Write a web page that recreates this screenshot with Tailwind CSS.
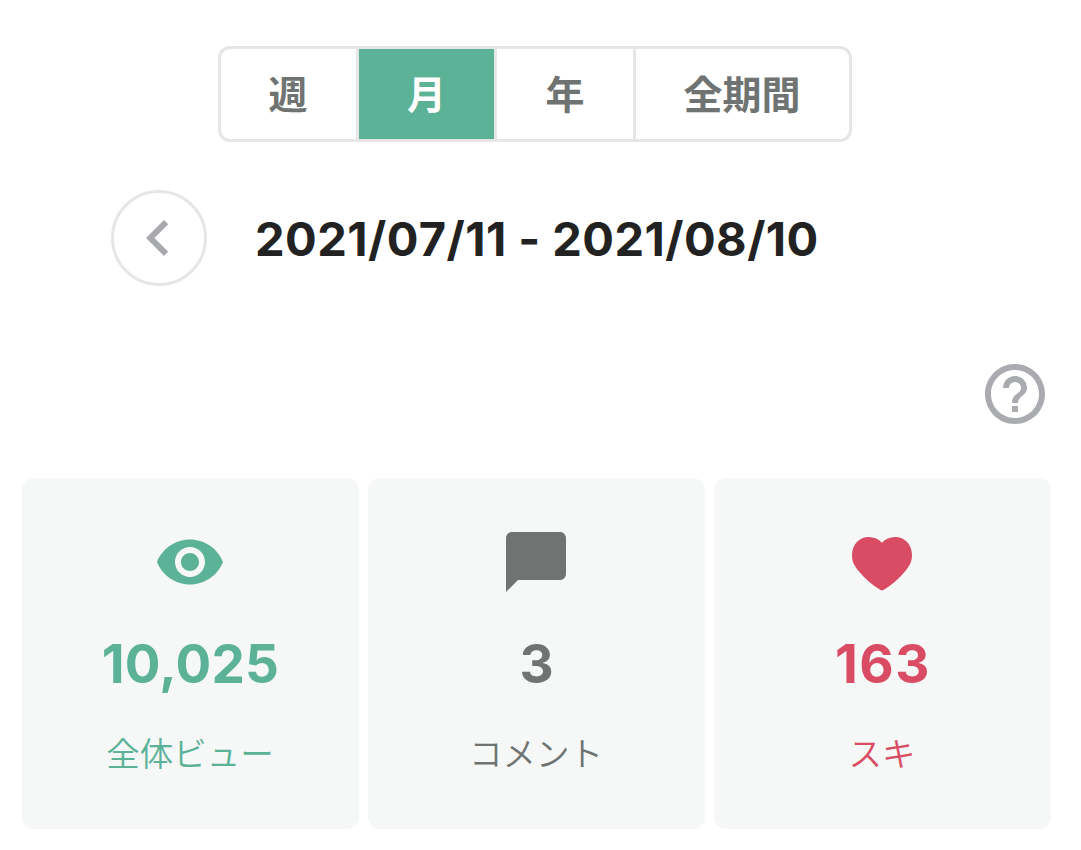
<!DOCTYPE html>
<html lang="ja">
<head>
	<meta charset="UTF-8" />
	<meta name="viewport" content="width=device-width, initial-scale=1.0" />
	<title>ダッシュボード</title>
	<script src="https://cdn.jsdelivr.net/npm/@tailwindcss/browser@4"></script>
</head>
<body class="bg-white font-['Inter','Noto_Sans_CJK_JP',sans-serif] text-[#222222]">
	<main class="w-[1081px] h-[850px] overflow-hidden pt-[46px]">
		<!-- Period tabs -->
		<div class="ml-[218px] w-[634px] h-24 flex border-3 border-[#e6e6e6] rounded-xl overflow-hidden text-[39px] leading-[90px] font-bold text-[#6f7372]">
			<button class="w-[138px] pt-px pr-px border-r-3 border-[#e6e6e6]">週</button>
			<button class="w-[138px] pt-px border-r-3 border-[#e6e6e6] bg-[#5bb296] bg-clip-padding text-white">月</button>
			<button class="w-[139px] pt-px border-r-3 border-[#e6e6e6]">年</button>
			<button class="flex-1 pt-px pr-px">全期間</button>
		</div>

		<!-- Date range -->
		<div class="mt-12 ml-[111px] flex items-center">
			<button class="size-24 pr-[2px] flex items-center justify-center rounded-full border-3 border-[#e6e6e6] text-[#a7a9ac]">
				<svg class="size-[72px]" viewBox="0 0 24 24" fill="currentColor">
					<path d="M15.41 7.41L14 6l-6 6 6 6 1.41-1.41L10.83 12z" />
				</svg>
			</button>
			<p class="ml-12 pt-px text-[47px] leading-none font-bold tracking-[0.45px] whitespace-nowrap [font-kerning:none] [font-feature-settings:'calt'_0]">2021/07/11 - 2021/08/10</p>
		</div>

		<!-- Help -->
		<div class="mt-[72px] pr-[30px] flex justify-end text-[#a9abb0]">
			<svg class="size-[72px]" viewBox="0 0 24 24" fill="currentColor">
				<path d="M11 18h2v-2h-2v2zm1-16C6.48 2 2 6.48 2 12s4.48 10 10 10 10-4.48 10-10S17.52 2 12 2zm0 18c-4.41 0-8-3.59-8-8s3.59-8 8-8 8 3.59 8 8-3.59 8-8 8zm0-14c-2.21 0-4 1.79-4 4h2c0-1.1.9-2 2-2s2 .9 2 2c0 2-3 1.75-3 5h2c0-2.25 3-2.5 3-5 0-2.21-1.79-4-4-4z" />
			</svg>
		</div>

		<!-- Stats -->
		<div class="mt-12 ml-[22px] w-[1029px] grid grid-cols-3 gap-[9px] text-center">
			<div class="h-[351px] pt-12 flex flex-col items-center rounded-xl bg-[#f6f8f8] text-[#5bb296]">
				<svg class="size-[72px] mr-[2px]" viewBox="0 0 24 24" fill="currentColor">
					<path d="M12 4.5C7 4.5 2.73 7.61 1 12c1.73 4.39 6 7.5 11 7.5s9.27-3.11 11-7.5c-1.73-4.39-6-7.5-11-7.5zM12 17c-2.76 0-5-2.24-5-5s2.24-5 5-5 5 2.24 5 5-2.24 5-5 5zm0-8c-1.66 0-3 1.34-3 3s1.34 3 3 3 3-1.34 3-3-1.34-3-3-3z" />
				</svg>
				<p class="mt-[30px] text-[53px] leading-[72px] font-bold tracking-[0.2px]">10,025</p>
				<p class="mt-[30px] mr-px text-[33.5px] leading-[48px] font-[350]">全体ビュー</p>
			</div>
			<div class="h-[351px] pt-12 flex flex-col items-center rounded-xl bg-[#f6f8f8] text-[#6f7372]">
				<svg class="size-[72px] mr-[2px]" viewBox="0 0 24 24" fill="currentColor">
					<path d="M20 2H4c-1.1 0-2 .9-2 2v18l4-4h14c1.1 0 2-.9 2-2V4c0-1.1-.9-2-2-2z" />
				</svg>
				<p class="mt-[30px] text-[53px] leading-[72px] font-bold">3</p>
				<p class="mt-[30px] mr-px text-[33.5px] leading-[48px] font-[350]">コメント</p>
			</div>
			<div class="h-[351px] pt-12 flex flex-col items-center rounded-xl bg-[#f6f8f8] text-[#d94c63]">
				<svg class="size-[72px] mr-[2px]" viewBox="0 0 24 24" fill="currentColor">
					<path d="M12 5.6C10.9 4.35 9.4 3.67 7.65 3.67C4.4 3.67 2 6.2 2 9.7C2 11.9 2.7 13.2 4.2 15C6.3 17.5 8.7 19.7 11.5 21.3Q12 21.6 12.5 21.3C15.3 19.7 17.7 17.5 19.8 15C21.3 13.2 22 11.9 22 9.7C22 6.2 19.6 3.67 16.35 3.67C14.6 3.67 13.1 4.35 12 5.6z" />
				</svg>
				<p class="mt-[30px] pl-px text-[53px] leading-[72px] font-bold tracking-[1.5px] [font-kerning:none]">163</p>
				<p class="mt-[30px] mr-px text-[33.5px] leading-[48px] font-[350]">スキ</p>
			</div>
		</div>
	</main>
</body>
</html>
